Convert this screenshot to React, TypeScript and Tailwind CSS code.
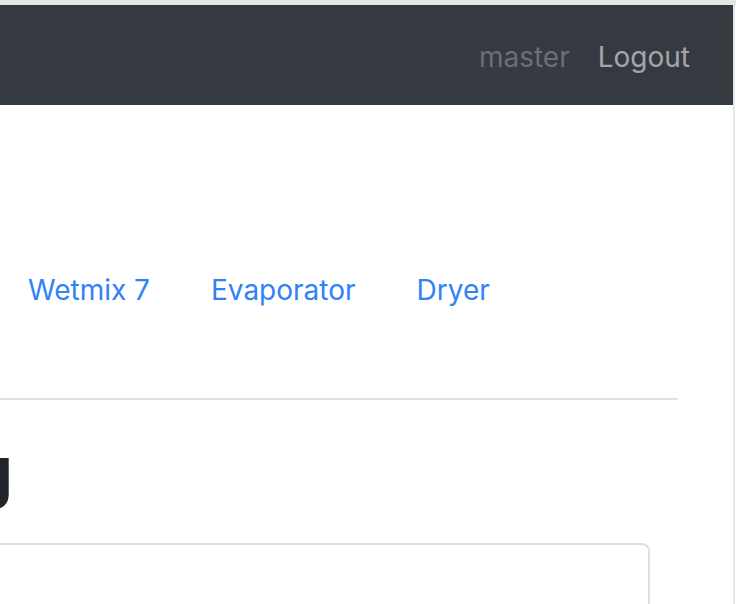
import React from "react";

export default function App() {
  return (
    <div className="w-[736px] h-[604px] overflow-hidden bg-white flex flex-col font-['Inter','Liberation_Sans',sans-serif]">
      <div className="h-[5px] bg-[#e6e6e6] shrink-0" />
      <div className="flex flex-1 min-h-0">
        <div className="w-[733px] flex flex-col overflow-hidden">
          <nav className="h-[100px] shrink-0 bg-[#343a40] flex items-center justify-end pr-[43px] gap-[28px] text-[28px] leading-[40px] pt-[3px]">
            <span className="text-[#6b6f74]">master</span>
            <a className="text-[#a3a6a9]">Logout</a>
          </nav>
          <div className="shrink-0 mt-[165px] flex gap-[61px] pl-[28px] text-[28px] leading-[40px] text-[#3082f6]">
            <a>Wetmix 7</a>
            <a>Evaporator</a>
            <a>Dryer</a>
          </div>
          <div className="shrink-0 mt-[88px] w-[678px] h-[2px] bg-[#dee2e6]" />
          <h1 className="shrink-0 mt-[29px] ml-[-30px] text-[68px] leading-[82px] font-bold text-[#212529]">g</h1>
          <div className="mt-[32px] ml-[-10px] w-[660px] h-[120px] shrink-0 border-2 border-[#dfdfdf] rounded-[8px]" />
        </div>
        <div className="w-[2px] bg-[#e6e6e6]" />
        <div className="w-[1px] bg-white" />
      </div>
    </div>
  );
}
